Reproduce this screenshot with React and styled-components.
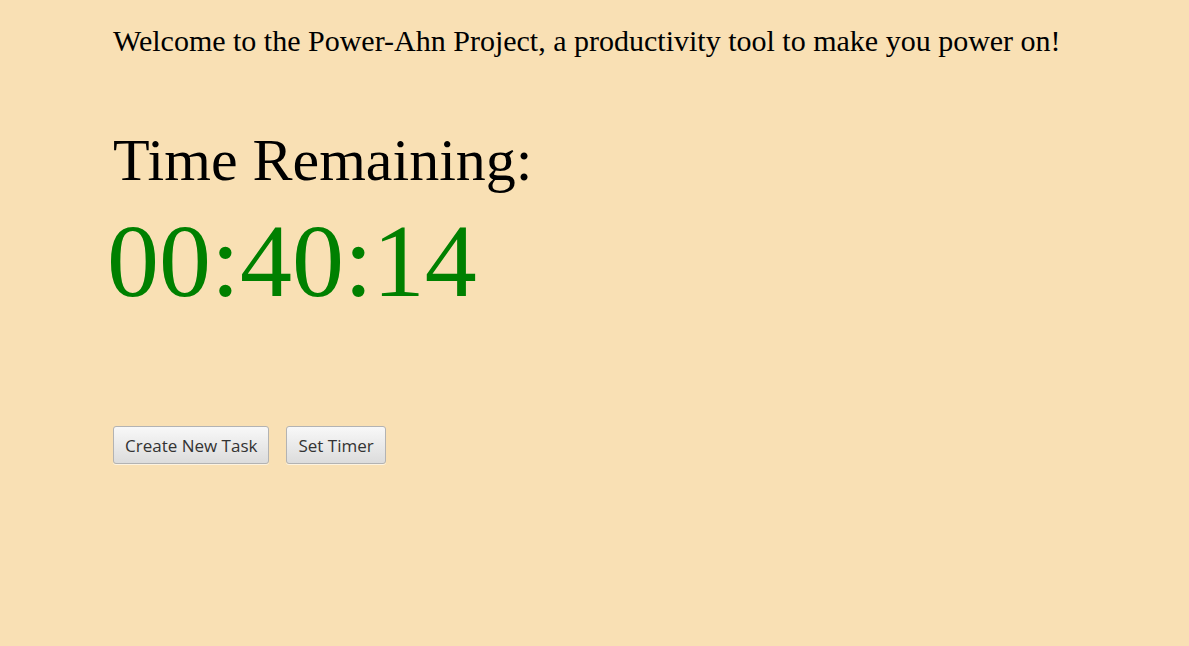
import React from 'react'
import styled, { createGlobalStyle } from 'styled-components'

const GlobalStyle = createGlobalStyle`
  html, body {
    margin: 0;
    padding: 0;
    background-color: #f9e0b4;
  }
`

const Page = styled.div`
  display: flex;
  flex-direction: column;
  align-items: flex-start;
  min-height: 646px;
  padding: 0 0 0 113px;
  box-sizing: border-box;
  background-color: #f9e0b4;
  font-family: 'Liberation Serif', 'Times New Roman', serif;
`

const Welcome = styled.p`
  margin: 23px 0 0 0;
  font-size: 30px;
  line-height: 36px;
  color: #000;
`

const Label = styled.h2`
  margin: 66px 0 0 0;
  font-size: 60px;
  font-weight: normal;
  line-height: 70px;
  color: #000;
`

const Clock = styled.div`
  margin: 6px 0 0 -6px;
  font-size: 104px;
  line-height: 120px;
  color: #008000;
`

const Actions = styled.div`
  display: flex;
  gap: 17px;
  margin-top: 105px;
`

const Button = styled.button`
  height: 38px;
  padding: 0 11px;
  border: 1px solid #b3b3b3;
  border-radius: 3px;
  background: linear-gradient(#f8f8f8, #dcdcdc);
  color: #333;
  font-family: 'Open Sans', 'Noto Sans', sans-serif;
  font-size: 17px;
  box-shadow: 0 1px 0 rgba(255, 255, 255, 0.6);
  cursor: pointer;
`

const App = () => {
  return (
    <Page>
      <GlobalStyle />
      <Welcome>
        Welcome to the Power-Ahn Project, a productivity tool to make you power on!
      </Welcome>
      <Label>Time Remaining:</Label>
      <Clock>00:40:14</Clock>
      <Actions>
        <Button>Create New Task</Button>
        <Button>Set Timer</Button>
      </Actions>
    </Page>
  )
}

export default App
